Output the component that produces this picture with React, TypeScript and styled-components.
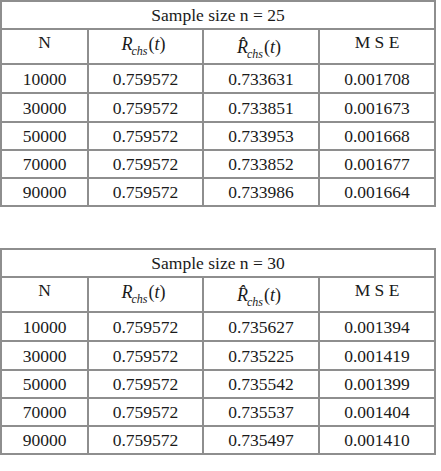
import React from "react";
import styled, { createGlobalStyle } from "styled-components";

interface IRow {
  n: string;
  r: string;
  rhat: string;
  mse: string;
}

interface ISample {
  size: number;
  rows: IRow[];
}

const samples: ISample[] = [
  {
    size: 25,
    rows: [
      { n: "10000", r: "0.759572", rhat: "0.733631", mse: "0.001708" },
      { n: "30000", r: "0.759572", rhat: "0.733851", mse: "0.001673" },
      { n: "50000", r: "0.759572", rhat: "0.733953", mse: "0.001668" },
      { n: "70000", r: "0.759572", rhat: "0.733852", mse: "0.001677" },
      { n: "90000", r: "0.759572", rhat: "0.733986", mse: "0.001664" },
    ],
  },
  {
    size: 30,
    rows: [
      { n: "10000", r: "0.759572", rhat: "0.735627", mse: "0.001394" },
      { n: "30000", r: "0.759572", rhat: "0.735225", mse: "0.001419" },
      { n: "50000", r: "0.759572", rhat: "0.735542", mse: "0.001399" },
      { n: "70000", r: "0.759572", rhat: "0.735537", mse: "0.001404" },
      { n: "90000", r: "0.759572", rhat: "0.735497", mse: "0.001410" },
    ],
  },
];

const rowHeights = [29, 29, 28, 28, 28];

// R_chs(t), with a hat on the R for the estimate
function Rchs({ hat }: { hat?: boolean }) {
  return (
    <Formula $hat={hat}>
      <Letter>{hat ? "R\u0302" : "R"}</Letter>
      <Sub>chs</Sub>
      <Paren>(</Paren>
      <Letter>t</Letter>
      <Paren>)</Paren>
    </Formula>
  );
}

function App() {
  return (
    <>
      <GlobalStyle />
      <Page>
        {samples.map((sample) => (
          <Table key={sample.size}>
            <colgroup>
              <col style={{ width: 87 }} />
              <col style={{ width: 115 }} />
              <col style={{ width: 116 }} />
              <col style={{ width: 116 }} />
            </colgroup>
            <tbody>
              <Row $h={28}>
                <Cell colSpan={4}>Sample size n = {sample.size}</Cell>
              </Row>
              <Row $h={35}>
                <HeadCell>N</HeadCell>
                <HeadCell>
                  <Rchs />
                </HeadCell>
                <HeadCell>
                  <Rchs hat />
                </HeadCell>
                <HeadCell>M S E</HeadCell>
              </Row>
              {sample.rows.map((row, idx) => (
                <Row $h={rowHeights[idx]} key={row.n}>
                  <Cell>{row.n}</Cell>
                  <Cell>{row.r}</Cell>
                  <Cell>{row.rhat}</Cell>
                  <Cell>{row.mse}</Cell>
                </Row>
              ))}
            </tbody>
          </Table>
        ))}
      </Page>
    </>
  );
}

export default App;

const GlobalStyle = createGlobalStyle`
  body {
    margin: 0;
    background: #ffffff;
    font-family: "Liberation Serif", "Times New Roman", serif;
    color: #1a1a1a;
  }
`;

const Page = styled.div`
  display: flex;
  flex-direction: column;
  gap: 41px;
  width: 441px;
`;

const Table = styled.table`
  width: 435px;
  table-layout: fixed;
  border-collapse: collapse;
  border-top: 2px solid #3c3c3c;
  border-left: 2px solid #3c3c3c;
  border-right: 2px solid #3c3c3c;
  border-bottom: 2px solid #7a7a7a;
  font-family: "Liberation Serif", "Times New Roman", serif;
  font-size: 17.5px;
  line-height: 20px;
  color: #1a1a1a;
`;

const Row = styled.tr<{ $h: number }>`
  height: ${(p) => p.$h}px;
`;

const Cell = styled.td`
  border: 2px solid #8e8e8e;
  padding: 0;
  text-align: center;
  vertical-align: middle;
`;

const HeadCell = styled(Cell)`
  vertical-align: top;
  padding-top: 2px;
`;

const Formula = styled.span<{ $hat?: boolean }>`
  display: inline-block;
  margin-top: ${(p) => (p.$hat ? "6px" : "3px")};
  margin-left: -4px;
  font-size: 18px;
  line-height: 18px;
  white-space: nowrap;
`;

const Letter = styled.i`
  display: inline-block;
`;

const Sub = styled.i`
  font-size: 12px;
  line-height: 12px;
  vertical-align: -5px;
  margin-left: -1px;
  margin-right: 1px;
`;

const Paren = styled.span`
  font-style: normal;
`;
